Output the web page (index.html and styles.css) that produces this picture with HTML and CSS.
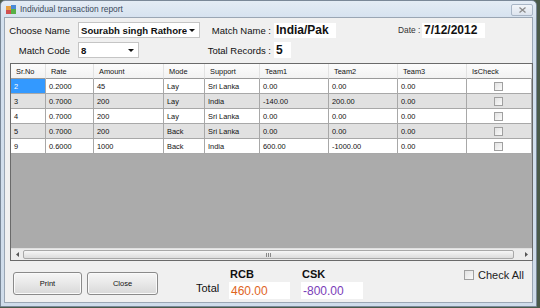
FILE: index.html
```html
<!DOCTYPE html>
<html>
<head>
<meta charset="utf-8">
<link rel="stylesheet" href="styles.css">
</head>
<body>
<div class="window">
  <div class="titlebar">
    <svg class="appicon" width="10" height="9" viewBox="0 0 10 9">
      <rect x="0" y="1" width="5" height="4" fill="#e8a040"/>
      <rect x="5" y="0" width="5" height="4" fill="#4a8ad8"/>
      <rect x="0" y="5" width="5" height="4" fill="#d05050"/>
      <rect x="5" y="4" width="5" height="5" fill="#58b048"/>
    </svg>
    <span class="title">Individual transaction report</span>
    <div class="closebtn"><svg width="7" height="6" viewBox="0 0 7 6"><path d="M0.5 0.5 L6.5 5.5 M6.5 0.5 L0.5 5.5" stroke="#8a8a8a" stroke-width="1.3"/></svg></div>
  </div>
  <div class="client">
    <div class="row row1">
      <div class="lbl lbl-left">Choose Name</div>
      <div class="combo combo-name"><span class="combo-text">Sourabh singh Rathore</span><span class="arrow"></span></div>
      <div class="lbl lbl-mid1">Match Name :</div>
      <div class="tbox tb-match">India/Pak</div>
      <div class="lbl lbl-date">Date :</div>
      <div class="tbox tb-date">7/12/2012</div>
    </div>
    <div class="row row2">
      <div class="lbl lbl-left">Match Code</div>
      <div class="combo combo-code"><span class="combo-text">8</span><span class="arrow"></span></div>
      <div class="lbl lbl-mid2">Total Records :</div>
      <div class="tbox tb-total">5</div>
    </div>
    <div class="grid">
      <div class="gtable">
        <div class="hc">Sr.No</div><div class="hc">Rate</div><div class="hc">Amount</div><div class="hc">Mode</div><div class="hc">Support</div><div class="hc">Team1</div><div class="hc">Team2</div><div class="hc">Team3</div><div class="hc">IsCheck</div>

        <div class="c sel">2</div><div class="c">0.2000</div><div class="c">45</div><div class="c">Lay</div><div class="c">Sri Lanka</div><div class="c">0.00</div><div class="c">0.00</div><div class="c">0.00</div><div class="c cc"><span class="cb"></span></div>

        <div class="c alt">3</div><div class="c alt">0.7000</div><div class="c alt">200</div><div class="c alt">Lay</div><div class="c alt">India</div><div class="c alt">-140.00</div><div class="c alt">200.00</div><div class="c alt">0.00</div><div class="c alt cc"><span class="cb"></span></div>

        <div class="c">4</div><div class="c">0.7000</div><div class="c">200</div><div class="c">Lay</div><div class="c">Sri Lanka</div><div class="c">0.00</div><div class="c">0.00</div><div class="c">0.00</div><div class="c cc"><span class="cb"></span></div>

        <div class="c alt">5</div><div class="c alt">0.7000</div><div class="c alt">200</div><div class="c alt">Back</div><div class="c alt">Sri Lanka</div><div class="c alt">0.00</div><div class="c alt">0.00</div><div class="c alt">0.00</div><div class="c alt cc"><span class="cb"></span></div>

        <div class="c">9</div><div class="c">0.6000</div><div class="c">1000</div><div class="c">Back</div><div class="c">India</div><div class="c">600.00</div><div class="c">-1000.00</div><div class="c">0.00</div><div class="c cc"><span class="cb"></span></div>
      </div>
      <div class="empty"></div>
      <div class="hscroll">
        <div class="sarrow"><svg width="3" height="5" viewBox="0 0 3 5"><path d="M3 0 L0 2.5 L3 5 Z" fill="#555"/></svg></div>
        <div class="thumb"><span class="grip"></span><span class="grip"></span><span class="grip"></span></div>
        <div class="sarrow"><svg width="3" height="5" viewBox="0 0 3 5"><path d="M0 0 L3 2.5 L0 5 Z" fill="#555"/></svg></div>
      </div>
    </div>
    <div class="bottom">
      <div class="btn btn-print">Print</div>
      <div class="btn btn-close">Close</div>
      <div class="total-lbl">Total</div>
      <div class="team">
        <div class="team-name">RCB</div>
        <div class="tbox tb-rcb">460.00</div>
      </div>
      <div class="team">
        <div class="team-name">CSK</div>
        <div class="tbox tb-csk">-800.00</div>
      </div>
      <div class="checkall"><span class="cb cb-all"></span><span>Check All</span></div>
    </div>
  </div>
</div>
</body>
</html>
```

FILE: styles.css
```css
* { box-sizing: border-box; }
html, body { margin: 0; padding: 0; }
body {
  width: 540px;
  height: 308px;
  background: #4a5a4a;
  font-family: "Liberation Sans", Arial, sans-serif;
  overflow: hidden;
}
.window {
  width: 537px;
  height: 307px;
  border: 1px solid #7a8898;
  border-radius: 5px 5px 0 0;
  background: linear-gradient(#e4ecf5, #d3e0ee 20px, #cfdcea);
  padding: 0 3px 3px 3px;
  display: flex;
  flex-direction: column;
}
.titlebar {
  height: 16px;
  display: flex;
  align-items: center;
  position: relative;
}
.appicon { margin-left: 2px; margin-right: 4px; }
.title {
  font-size: 8.4px;
  color: #3c4a5c;
}
.closebtn {
  position: absolute;
  right: 0;
  top: 3px;
  width: 22px;
  height: 12px;
  border: 1px solid #a9b6c6;
  border-radius: 2px;
  background: linear-gradient(#f2f5f9, #dde4ee);
  display: flex;
  align-items: center;
  justify-content: center;
}
.client {
  flex: 1;
  background: #f0f0f0;
  border: 1px solid #9aa6b4;
  display: flex;
  flex-direction: column;
}
.row {
  display: flex;
  align-items: center;
  height: 16px;
  font-size: 9.5px;
  color: #111;
}
.row1 { margin-top: 4px; }
.row2 { margin-top: 4px; }
.lbl { white-space: nowrap; }
.lbl-left {
  width: 73px;
  text-align: right;
  padding-right: 8px;
}
.combo {
  height: 16px;
  background: #fff;
  border: 1px solid #c5c5c5;
  display: flex;
  align-items: center;
  padding-left: 2px;
  position: relative;
}
.combo-text {
  font-weight: bold;
  font-size: 9.6px;
  white-space: nowrap;
  overflow: hidden;
  flex: 1;
}
.arrow {
  width: 0; height: 0;
  border-left: 3px solid transparent;
  border-right: 3px solid transparent;
  border-top: 3px solid #111;
  margin: 0 4px 0 2px;
  flex: none;
}
.combo-name { width: 122px; }
.combo-code { width: 61px; }
.lbl-mid1 {
  width: 74px;
  text-align: right;
  padding-right: 3px;
}
.lbl-mid2 {
  width: 135px;
  text-align: right;
  padding-right: 3px;
}
.tbox {
  background: #fff;
  font-weight: bold;
  font-size: 12px;
  color: #111;
  display: flex;
  align-items: center;
  padding-left: 2px;
  white-space: nowrap;
}
.tb-match { width: 62px; height: 15px; }
.lbl-date {
  margin-left: 62px;
  width: 24px;
  font-size: 8.4px;
  color: #333;
  text-align: right;
  padding-right: 2px;
}
.tb-date { width: 63px; height: 15px; }
.tb-total { width: 17px; height: 16px; }

.grid {
  margin: 5px 0 0 5px;
  width: 523px;
  height: 198px;
  border: 1px solid #6a6a6a;
  display: flex;
  flex-direction: column;
  background: #ababab;
}
.gtable {
  display: grid;
  grid-template-columns: 35px 48px 70px 41px 55px 69px 69px 69px 65px;
  grid-auto-rows: 15px;
  font-size: 7.4px;
  color: #111;
}
.hc {
  background: linear-gradient(#fcfcfc, #f2f2f2);
  border-right: 1px solid #e2e2e2;
  border-bottom: 1px solid #9a9a9a;
  padding-left: 5px;
  display: flex;
  align-items: center;
}
.c {
  background: #fff;
  border-right: 1px solid #a8a8a8;
  border-bottom: 1px solid #a8a8a8;
  padding-left: 3px;
  display: flex;
  align-items: center;
}
.c.alt { background: #e1e1e1; }
.c.sel { background: #3399ff; color: #fff; }
.cc { justify-content: center; padding-left: 0; padding-right: 2px; }
.cb {
  width: 9px;
  height: 9px;
  border: 1px solid #a0a0a0;
  background: linear-gradient(135deg, #e2e2e2, #fafafa);
  display: inline-block;
}
.empty { flex: 1; }
.hscroll {
  height: 12px;
  background: #ececec;
  display: flex;
  align-items: stretch;
  border-top: 1px solid #e0e0e0;
}
.sarrow {
  width: 12px;
  display: flex;
  align-items: center;
  justify-content: center;
}
.thumb {
  flex: 1;
  margin: 1px 6px 1px 0;
  border: 1px solid #a8a8a8;
  border-radius: 2px;
  background: linear-gradient(#f6f6f6, #dcdcdc);
  display: flex;
  align-items: center;
  justify-content: center;
  gap: 1px;
}
.grip {
  width: 1px;
  height: 4px;
  background: #888;
}
.bottom {
  display: flex;
  align-items: flex-start;
  margin-top: 7px;
  margin-left: 8px;
}
.btn {
  height: 23px;
  margin-top: 4px;
  border: 1px solid #8a8a8a;
  border-radius: 3px;
  background: linear-gradient(#f6f6f6, #e8e8e8 50%, #d8d8d8);
  font-size: 7.5px;
  color: #111;
  display: flex;
  align-items: center;
  justify-content: center;
  box-shadow: inset 0 0 0 1px #fafafa;
}
.btn-print { width: 69px; }
.btn-close { width: 71px; margin-left: 5px; }
.total-lbl {
  margin-left: 38px;
  margin-top: 14px;
  font-size: 11px;
  color: #111;
  width: 33px;
}
.team { display: flex; flex-direction: column; margin-right: 11px; }
.team-name {
  font-weight: bold;
  font-size: 11px;
  color: #111;
  height: 13px;
  line-height: 13px;
  padding-left: 1px;
}
.tb-rcb {
  width: 61px; height: 17px; margin-top: 1px;
  font-weight: normal; color: #e0651e; font-size: 12px;
}
.tb-csk {
  width: 62px; height: 17px; margin-top: 1px;
  font-weight: normal; color: #7a3db8; font-size: 12px;
}
.checkall {
  margin-left: 90px;
  margin-top: 1px;
  display: flex;
  align-items: center;
  gap: 4px;
  font-size: 11px;
  color: #222;
}
.cb-all { width: 10px; height: 10px; }
```
